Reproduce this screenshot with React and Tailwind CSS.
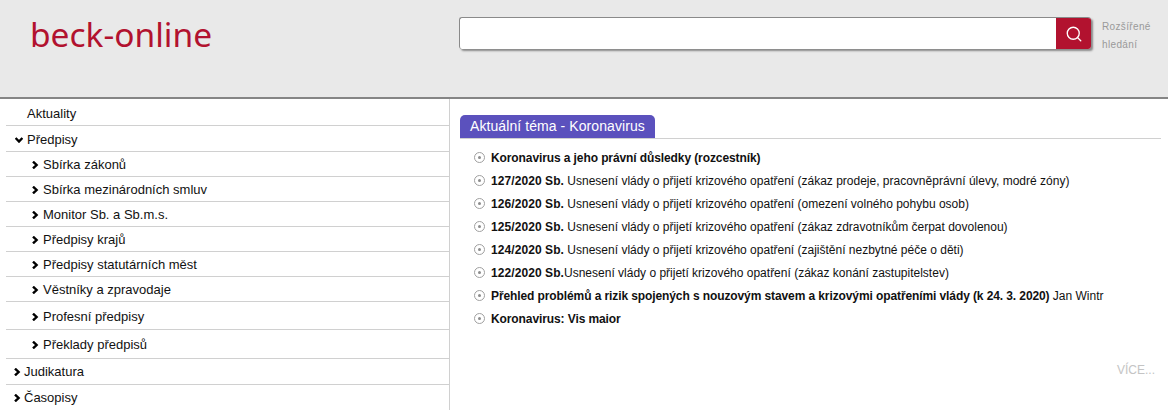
import { Search } from "lucide-react";

const arial = "font-['Liberation_Sans',Arial,sans-serif]";

function Chevron({ down }) {
  return (
    <svg width="8" height="8" viewBox="0 0 8 8" className={down ? "rotate-90 shrink-0" : "shrink-0"}>
      <path d="M2 0.6 L5.6 4 L2 7.4" fill="none" stroke="#000" strokeWidth="2.4" />
    </svg>
  );
}

function NavRow({ label, h, level = 0, down, last, closed }) {
  return (
    <div className={`flex items-center ${h} ${closed ? "" : "pt-[2px]"} ${last ? "" : "border-b border-[#d0d0d0]"}`}>
      {level === 0 && <span className="w-[21px] shrink-0" />}
      {level === 1 && (
        <span className={`flex shrink-0 justify-end ${closed ? "w-[18px] pr-[3px]" : "w-[21px] pr-[4px]"}`}>
          <Chevron down={down} />
        </span>
      )}
      {level === 2 && (
        <span className="flex w-[37px] shrink-0 justify-end pr-[4px]">
          <Chevron />
        </span>
      )}
      <span className="text-[13px] text-[#111]">{label}</span>
    </div>
  );
}

const topics = [
  { bold: "Koronavirus a jeho právní důsledky (rozcestník)", tight: true },
  { bold: "127/2020 Sb.", text: " Usnesení vlády o přijetí krizového opatření (zákaz prodeje, pracovněprávní úlevy, modré zóny)" },
  { bold: "126/2020 Sb.", text: " Usnesení vlády o přijetí krizového opatření (omezení volného pohybu osob)" },
  { bold: "125/2020 Sb.", text: " Usnesení vlády o přijetí krizového opatření (zákaz zdravotníkům čerpat dovolenou)" },
  { bold: "124/2020 Sb.", text: " Usnesení vlády o přijetí krizového opatření (zajištění nezbytné péče o děti)" },
  { bold: "122/2020 Sb.", text: "Usnesení vlády o přijetí krizového opatření (zákaz konání zastupitelstev)" },
  { bold: "Přehled problémů a rizik spojených s nouzovým stavem a krizovými opatřeními vlády (k 24. 3. 2020)", text: " Jan Wintr", tight: true },
  { bold: "Koronavirus: Vis maior", tight: true },
];

export default function App() {
  return (
    <div className={`h-[410px] w-[1168px] overflow-hidden bg-white ${arial}`}>
      <header className="flex h-[99px] border-b-2 border-[#858585] bg-[#e9e9e9]">
        <div className="w-[459px] shrink-0 pl-[30px] pt-[10px]">
          <span className="font-['Noto_Sans',sans-serif] text-[33.5px] leading-[48px] text-[#b2122f]">beck-online</span>
        </div>
        <div className="mt-[17px] flex h-[32px] w-[632px] shrink-0 overflow-hidden rounded-[3px] border-t border-l border-[#8a8a8a] bg-white shadow-[2px_2px_2px_#8a8a8a]">
          <div className="flex-1" />
          <div className="flex w-[35px] items-center justify-center bg-[#b2122f]">
            <Search size={18} color="#fff" strokeWidth={1.8} />
          </div>
        </div>
        <div className="ml-[11px] mt-[18px] w-[60px] text-[10px] leading-[17.5px] tracking-[0.35px] text-[#999]">
          Rozšířené hledání
        </div>
      </header>
      <div className="flex h-[311px]">
        <nav className="w-[450px] shrink-0 border-r border-[#d0d0d0] pl-[6px]">
          <NavRow label="Aktuality" h="h-[27px] pt-[4px]" />
          <NavRow label="Předpisy" h="h-[26px]" level={1} down />
          <NavRow label="Sbírka zákonů" h="h-[25px]" level={2} />
          <NavRow label="Sbírka mezinárodních smluv" h="h-[25px]" level={2} />
          <NavRow label="Monitor Sb. a Sb.m.s." h="h-[25px]" level={2} />
          <NavRow label="Předpisy krajů" h="h-[25px]" level={2} />
          <NavRow label="Předpisy statutárních měst" h="h-[25px]" level={2} />
          <NavRow label="Věstníky a zpravodaje" h="h-[25px]" level={2} />
          <NavRow label="Profesní předpisy" h="h-[28px]" level={2} />
          <NavRow label="Překlady předpisů" h="h-[29px]" level={2} />
          <NavRow label="Judikatura" h="h-[26px]" level={1} closed />
          <NavRow label="Časopisy" h="h-[26px]" level={1} closed last />
        </nav>
        <main className="flex-1 pl-[10px] pr-[7px] pt-[16px]">
          <div className="border-b border-[#d0d0d0]">
            <div className="flex h-[23px] w-[195px] items-center rounded-t-[5px] bg-[#5b51bd] pl-[10px] text-[14px] tracking-[0.08px] text-white">
              Aktuální téma - Koronavirus
            </div>
          </div>
          <ul className="mt-[7px] flex flex-col">
            {topics.map((t) => (
              <li key={t.bold} className="flex h-[23px] items-center pl-[14px] text-[12px] text-[#111]">
                <span className="mr-[6px] flex h-[11px] w-[11px] shrink-0 items-center justify-center rounded-full border border-[#a0a0a0]">
                  <span className="h-[3px] w-[3px] rounded-full bg-[#8c8c8c]" />
                </span>
                <span className="whitespace-pre">
                  <b className={t.tight ? "tracking-[-0.1px]" : "tracking-[0.08px]"}>{t.bold}</b>
                  {t.text}
                </span>
              </li>
            ))}
          </ul>
          <div className="mt-[31px] pr-[6px] text-right text-[12px] text-[#c4c4c4]">VÍCE...</div>
        </main>
      </div>
    </div>
  );
}
